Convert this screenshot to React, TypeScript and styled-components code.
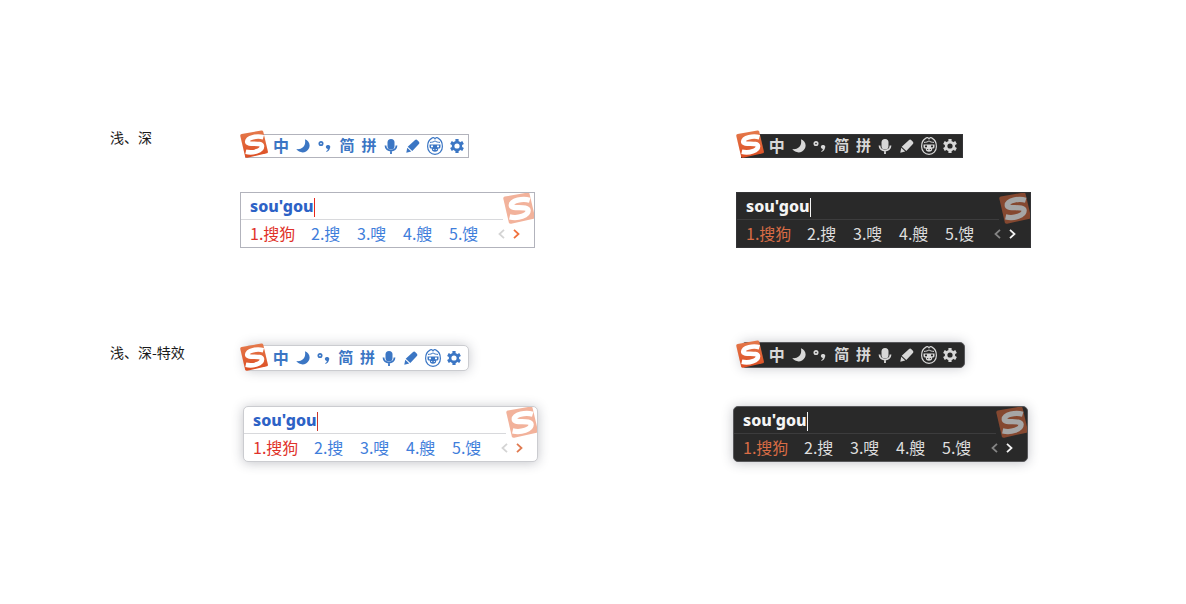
import React, { useId } from 'react';
import styled, { createGlobalStyle, ThemeProvider } from 'styled-components';

interface Skin {
  surface: string;
  border: string;
  icon: string;
  composing: string;
  caret: string;
  selected: string;
  candidate: string;
  divider: string;
  prev: string;
  next: string;
  stampBase: string;
  stampMark: string;
}

const light: Skin = {
  surface: '#ffffff',
  border: '#b2b3bc',
  icon: '#3b76c4',
  composing: '#2d62c6',
  caret: '#e8271b',
  selected: '#e0322a',
  candidate: '#3f7edb',
  divider: '#d8d9dc',
  prev: '#d4d4d4',
  next: '#f0703c',
  stampBase: '#f2b29b',
  stampMark: '#ffffff',
};

const dark: Skin = {
  surface: '#292929',
  border: '#343436',
  icon: '#d8d8d8',
  composing: '#f4f4f4',
  caret: '#f4f4f4',
  selected: '#d96c45',
  candidate: '#dedede',
  divider: '#3c3c3d',
  prev: '#858585',
  next: '#f4f4f4',
  stampBase: '#854830',
  stampMark: '#a6a6a6',
};

const lightEffect: Skin = { ...light, border: '#cbccd0', caret: '#c9352c', next: '#e07a50' };
const darkEffect: Skin = { ...dark, border: '#58585b' };

const GlobalStyle = createGlobalStyle`
  * { box-sizing: border-box; }
  body {
    margin: 0;
    background: #ffffff;
    font-family: "Noto Sans CJK SC", "Noto Sans", sans-serif;
  }
  button, input { font: inherit; }
`;

const Board = styled.main`
  display: grid;
  grid-template-columns: 130px minmax(320px, 496px) minmax(320px, 1fr);
  row-gap: 92px;
  padding: 130px 0 130px 110px;
`;

const RowLabel = styled.h2<{ $drop: number }>`
  margin: 0;
  padding-top: ${(p) => p.$drop}px;
  font-size: 14px;
  line-height: 14px;
  font-weight: 400;
  color: #1a1a1a;
`;

const Sample = styled.section<{ $gap: number }>`
  display: flex;
  flex-direction: column;
  justify-content: flex-end;
  align-items: flex-start;
  gap: ${(p) => p.$gap}px;
`;

const BarWrap = styled.div`
  position: relative;
  display: flex;
  align-items: flex-end;
  height: 28px;
  padding-left: 5px;
`;

const BarLogo = styled.span`
  position: absolute;
  left: 0;
  bottom: 0;
  display: flex;
`;

const Bar = styled.div<{ $width: number; $end: number; $effect: boolean }>`
  display: flex;
  align-items: center;
  width: ${(p) => p.$width}px;
  height: ${(p) => (p.$effect ? 26 : 24)}px;
  padding-left: 24px;
  padding-right: ${(p) => p.$end}px;
  border: 1px solid ${(p) => p.theme.border};
  border-radius: ${(p) => (p.$effect ? 5 : 0)}px;
  background: ${(p) => p.theme.surface};
  box-shadow: ${(p) => (p.$effect ? '0 0 12px rgba(40, 42, 60, 0.26)' : 'none')};
`;

const Tool = styled.button<{ $size?: number }>`
  flex: 1 1 0;
  display: flex;
  align-items: center;
  justify-content: center;
  min-width: 0;
  height: 22px;
  padding: 0;
  border: 0;
  background: none;
  color: ${(p) => p.theme.icon};
  font-size: ${(p) => p.$size ?? 15}px;
  font-weight: 700;
  line-height: 20px;
  white-space: nowrap;
  cursor: pointer;
  svg { flex: none; }
`;

const Glyph = styled.span`
  height: 22px;
`;

const Panel = styled.div<{ $shift: number; $effect: boolean }>`
  position: relative;
  width: 295px;
  margin-left: ${(p) => p.$shift}px;
  overflow: hidden;
  border: 1px solid ${(p) => p.theme.border};
  border-radius: ${(p) => (p.$effect ? 5 : 0)}px;
  background: ${(p) => p.theme.surface};
  box-shadow: ${(p) => (p.$effect ? '0 1px 12px rgba(40, 42, 60, 0.28)' : 'none')};
`;

const Composition = styled.div`
  display: flex;
  align-items: center;
  height: 27px;
  margin-right: 31px;
  padding-left: 9px;
  border-bottom: 1px solid ${(p) => p.theme.divider};
`;

const PinyinInput = styled.input`
  width: 64px;
  height: 26px;
  padding: 0;
  border: 0;
  outline: 0;
  background: none;
  color: ${(p) => p.theme.composing};
  font-family: "Noto Sans", sans-serif;
  font-size: 16px;
  font-weight: 800;
`;

const Caret = styled.span`
  width: 1px;
  height: 19px;
  margin-top: 3px;
  background: ${(p) => p.theme.caret};
`;

const CandidateRow = styled.div`
  display: flex;
  align-items: center;
  height: 27px;
  padding-left: 9px;
`;

const CandidateList = styled.ol`
  display: flex;
  height: 27px;
  margin: 0;
  padding: 0;
  list-style: none;
`;

const Candidate = styled.button<{ $selected: boolean }>`
  display: block;
  min-width: ${(p) => (p.$selected ? 61 : 46)}px;
  padding: 0;
  border: 0;
  background: none;
  color: ${(p) => (p.$selected ? p.theme.selected : p.theme.candidate)};
  font-size: 16px;
  line-height: 27px;
  text-align: left;
  white-space: nowrap;
  cursor: pointer;
`;

const Pager = styled.div`
  display: flex;
  gap: 8px;
  margin-left: 3px;
`;

const PageButton = styled.button<{ $kind: 'prev' | 'next' }>`
  display: flex;
  padding: 0;
  border: 0;
  background: none;
  color: ${(p) => (p.$kind === 'prev' ? p.theme.prev : p.theme.next)};
  cursor: pointer;
`;

const Stamp = styled.span`
  position: absolute;
  top: -1px;
  right: -1px;
  display: flex;
`;

function Logo({ size, base, mark = '#ffffff' }: { size: number; base?: string; mark?: string }) {
  const id = useId();
  return (
    <svg width={size} height={size} viewBox="0 0 28 28" aria-hidden="true">
      <defs>
        <linearGradient id={id} x1="0" y1="0" x2="0" y2="1">
          <stop offset="0" stopColor="#e57a4c" />
          <stop offset="1" stopColor="#dc4d22" />
        </linearGradient>
      </defs>
      <path
        d="M1.6 4 L21.4 .5 Q22.8 .3 23.2 1.600 L27.9 21.4 Q28.2 22.9 26.8 23.3 L7.2 27.8 Q5.6 28.1 5.1 26.6 L.3 6 Q0 4.3 1.6 4Z"
        fill={base ?? `url(#${id})`}
      />
      <path
        d="M23.4 7.200 C17 5.400 7.400 7.400 7.200 11.600 C7.200 15.800 21.600 11.600 22 16.200 C22 20.600 13.500 23.500 5.800 21.800"
        fill="none"
        stroke={mark}
        strokeWidth="4.600"
      />
    </svg>
  );
}

const MoonIcon = () => (
  <svg width="14" height="14" viewBox="0 0 14 14" fill="currentColor" aria-hidden="true">
    <path d="M8.9.3C13.2 2 14.8 6.2 12.7 9.8 10.2 14.4 3.6 14.7.3 10.1 5.3 11 10.5 7.400 8.900.3Z" />
  </svg>
);

const PunctuationIcon = () => (
  <svg width="14" height="14" viewBox="0 0 14 14" aria-hidden="true">
    <circle cx="3" cy="4.500" r="1.700" fill="none" stroke="currentColor" strokeWidth="1.700" />
    <path d="M7.800 7.800a2.200 2.200 0 1 1 4.200 1.200C11.600 11 10.500 12.300 8.600 13L8.200 12.100C9.300 11.500 9.800 10.900 9.900 10 8.800 9.900 7.800 9 7.800 7.800Z" fill="currentColor" />
  </svg>
);

const MicIcon = () => (
  <svg width="14" height="16" viewBox="0 0 14 16" aria-hidden="true">
    <rect x="3.500" y="1" width="7" height="10.500" rx="3.500" fill="currentColor" />
    <path d="M1.500 7.500C1.500 14.200 12.500 14.200 12.500 7.500M7 12.500V16" fill="none" stroke="currentColor" strokeWidth="1.800" />
  </svg>
);

const PenIcon = () => (
  <svg width="14" height="14" viewBox="0 0 14 14" fill="currentColor" aria-hidden="true">
    <path d="M8.800 1.200Q10.200 0 11.400 1.200L12.900 2.700Q14 3.800 12.900 5.100L6.300 11.900 1.700 7.700Z" />
    <path d="M1.200 8.700 5.200 12.600.3 13.800Z" />
  </svg>
);

const FaceIcon = () => (
  <svg width="16" height="18" viewBox="0 0 16 18" fill="none" stroke="currentColor" aria-hidden="true">
    <path
      d="M4.600 1.400C5.600.3 7.200.5 8 1.800 8.800.5 10.400.3 11.400 1.400 14 2.800 15.400 6 15.400 9.500 15.400 14 12.200 17.400 8 17.400S.6 14 .6 9.500C.6 6 2 2.800 4.600 1.400Z"
      strokeWidth="1.200"
    />
    <path d="M3 5.400C5 5.300 7 5 8 3.800 9 5 11 5.300 13 5.400" strokeWidth="1" />
    <path
      fillRule="evenodd"
      d="M2.500 7.500H13.500V9.800Q13.500 11.500 12.300 11.500H11.200C11.400 13.600 10 14.800 8 14.800S4.600 13.600 4.800 11.500H3.700Q2.500 11.500 2.500 9.800ZM4 8.600V10.200H6V8.600ZM10 8.600V10.200H12V8.600ZM6.200 12V13H7.200V12ZM8.800 12V13H9.800V12Z"
      fill="currentColor"
      stroke="none"
    />
  </svg>
);

const GearIcon = () => (
  <svg width="14" height="14" viewBox="-7 -7 14 14" fill="none" stroke="currentColor" aria-hidden="true">
    <circle r="3.900" strokeWidth="2.600" />
    {[0, 60, 120].map((angle) => (
      <path key={angle} d="M0 -7V-4.500M0 4.500V7" strokeWidth="3.200" transform={`rotate(${angle})`} />
    ))}
  </svg>
);

const Chevron = ({ flip = false }: { flip?: boolean }) => (
  <svg width="7" height="10" viewBox="0 0 7 10" fill="none" stroke="currentColor" strokeWidth="1.800" aria-hidden="true">
    <path d={flip ? 'M1 .800 5.500 5 1 9.200' : 'M6 .800 1.500 5 6 9.200'} />
  </svg>
);

function StatusBar({ width, end, effect = false }: { width: number; end: number; effect?: boolean }) {
  return (
    <BarWrap>
      <Bar $width={width} $end={end} $effect={effect} role="toolbar">
        <Tool $size={16}><Glyph>中</Glyph></Tool>
        <Tool aria-label="半角"><MoonIcon /></Tool>
        <Tool aria-label="中文标点"><PunctuationIcon /></Tool>
        <Tool><Glyph>简</Glyph></Tool>
        <Tool><Glyph>拼</Glyph></Tool>
        <Tool aria-label="语音"><MicIcon /></Tool>
        <Tool aria-label="手写"><PenIcon /></Tool>
        <Tool aria-label="表情"><FaceIcon /></Tool>
        <Tool aria-label="设置"><GearIcon /></Tool>
      </Bar>
      <BarLogo><Logo size={28} /></BarLogo>
    </BarWrap>
  );
}

const candidates = ['搜狗', '搜', '嗖', '艘', '馊'];

function CandidatePanel({ skin, shift = 0, effect = false }: { skin: Skin; shift?: number; effect?: boolean }) {
  return (
    <Panel $shift={shift} $effect={effect}>
      <Composition>
        <PinyinInput aria-label="拼音" defaultValue="sou'gou" spellCheck={false} />
        <Caret />
      </Composition>
      <CandidateRow>
        <CandidateList>
          {candidates.map((word, i) => (
            <li key={word}>
              <Candidate $selected={i === 0}>{`${i + 1}.${word}`}</Candidate>
            </li>
          ))}
        </CandidateList>
        <Pager>
          <PageButton $kind="prev" aria-label="上一页"><Chevron /></PageButton>
          <PageButton $kind="next" aria-label="下一页"><Chevron flip /></PageButton>
        </Pager>
      </CandidateRow>
      <Stamp><Logo size={32} base={skin.stampBase} mark={skin.stampMark} /></Stamp>
    </Panel>
  );
}

export default function App() {
  return (
    <>
      <GlobalStyle />
      <Board>
        <RowLabel $drop={0}>浅、深</RowLabel>
        <ThemeProvider theme={light}>
          <Sample $gap={34}>
            <StatusBar width={224} end={0} />
            <CandidatePanel skin={light} />
          </Sample>
        </ThemeProvider>
        <ThemeProvider theme={dark}>
          <Sample $gap={34}>
            <StatusBar width={222} end={1} />
            <CandidatePanel skin={dark} />
          </Sample>
        </ThemeProvider>

        <RowLabel $drop={5}>浅、深-特效</RowLabel>
        <ThemeProvider theme={lightEffect}>
          <Sample $gap={35}>
            <StatusBar width={224} end={3} effect />
            <CandidatePanel skin={lightEffect} shift={3} effect />
          </Sample>
        </ThemeProvider>
        <ThemeProvider theme={darkEffect}>
          <Sample $gap={38}>
            <StatusBar width={224} end={3} effect />
            <CandidatePanel skin={darkEffect} shift={-3} effect />
          </Sample>
        </ThemeProvider>
      </Board>
    </>
  );
}
